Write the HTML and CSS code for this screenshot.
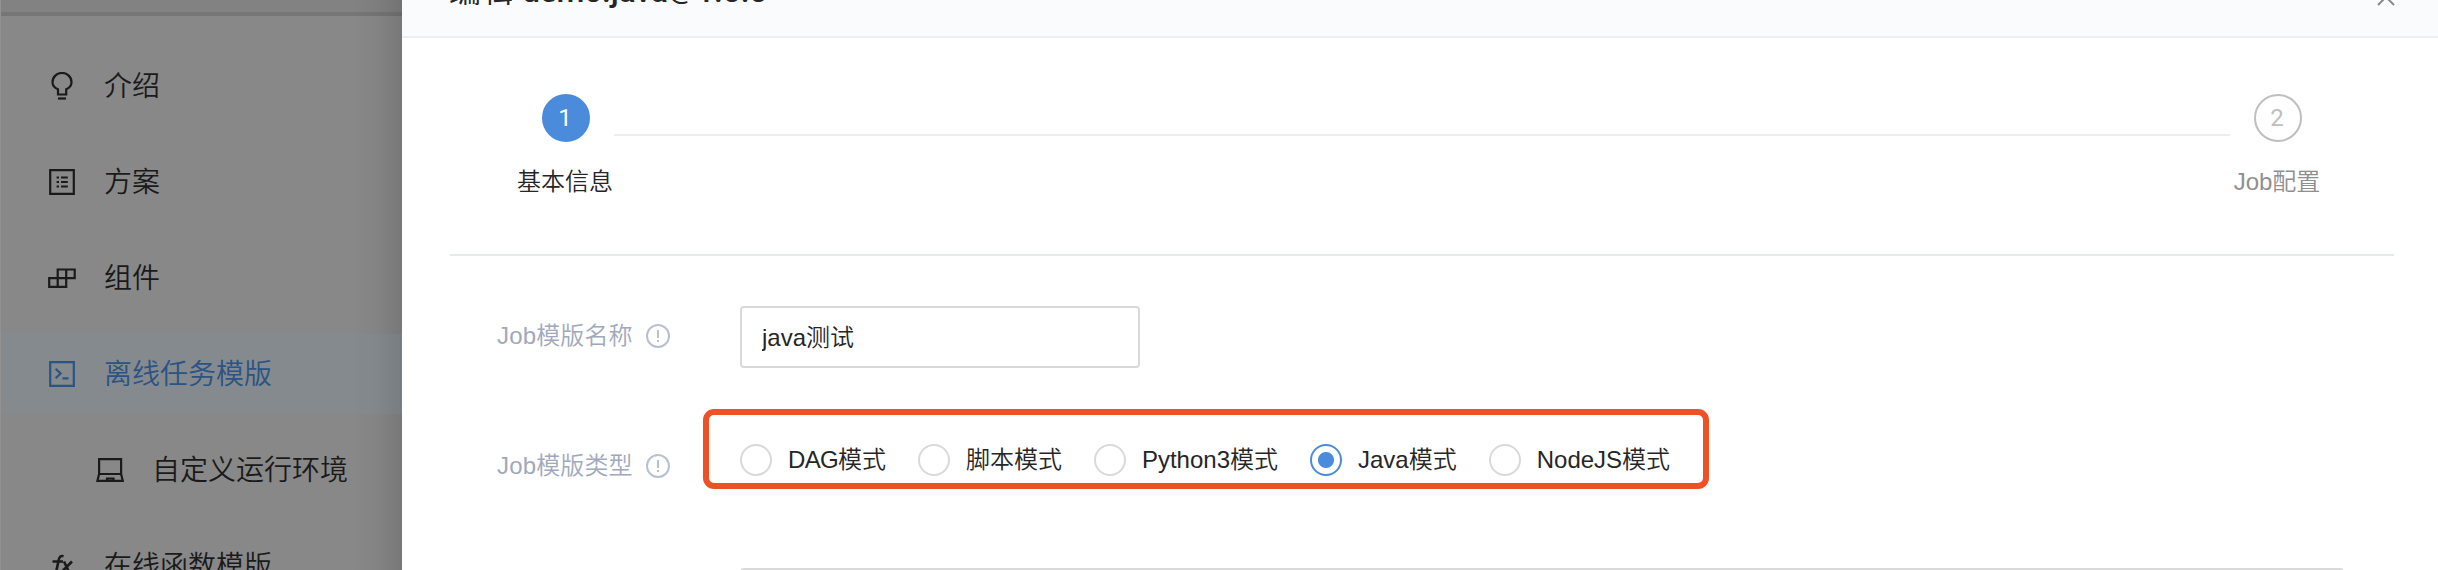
FILE: index.html
```html
<!DOCTYPE html>
<html lang="zh-CN">
<head>
<meta charset="utf-8">
<title>编辑 demo.java@1.0.0</title>
<link rel="stylesheet" href="styles.css">
</head>
<body>
<div class="app">
  <nav class="sidebar">
    <div class="topbar"></div>
    <ul class="menu">
      <li class="item">
        <svg class="icon" viewBox="0 0 28 28"><path d="M10 22.500v-5.200C6.500 15.700 4.500 13.200 4.500 10.200a9.500 9.300 0 0 1 19 0c0 3-2 5.500-5.300 7.100v5.200z"/><path d="M10 26.500h8"/></svg>
        <span>介绍</span>
      </li>
      <li class="item">
        <svg class="icon" viewBox="0 0 28 28"><path d="M2.200 2.200h23.600v23.600H2.200zM13 9.500h6.800M13 14h6.800M13 18.500h6.800M8.600 9.500h2.400M8.600 14h2.400M8.600 18.500h2.400"/></svg>
        <span>方案</span>
      </li>
      <li class="item">
        <svg class="icon" viewBox="0 0 28 28"><path d="M9.700 5.500h17v8.700h-17zM1.200 14.200h17v8.600h-17zM9.700 14.200v8.600M18.200 5.500v8.700"/></svg>
        <span>组件</span>
      </li>
      <li class="item active">
        <svg class="icon" viewBox="0 0 28 28"><path d="M2.200 2.200h23.600v23.600H2.200zM7.600 8.800l5 4.700-5 4.700M14.500 18.300h6"/></svg>
        <span>离线任务模版</span>
      </li>
      <li class="item child">
        <svg class="icon" viewBox="0 0 28 28"><path d="M3.100 3.100h22v14.900h-22zM3.100 18l-1.700 6.900h25.400l-1.700-6.900M11 24.900v-2.400h6.500v2.400"/></svg>
        <span>自定义运行环境</span>
      </li>
      <li class="item">
        <svg class="icon fx" viewBox="0 0 28 28"><path d="M15.500 4.200c-2.700-.8-4 .5-4.600 3L8 20.500c-.6 2.500-1.800 3.500-4 3M4.500 9.500h10.500M16 9.500l5.500 11.500M24 9.500L12.500 21"/></svg>
        <span>在线函数模版</span>
      </li>
    </ul>
  </nav>

  <main class="drawer">
    <header class="head">
      <h1 class="title"><span>编辑</span> <span class="name">demo.java<span class="at">@</span>1.0.0</span></h1>
      <svg class="close" viewBox="0 0 20 20"><path d="M2 2l16 16M18 2L2 18"/></svg>
    </header>

    <section class="steps">
      <div class="step current"><b class="dot">1</b><span>基本信息</span></div>
      <i class="rail"></i>
      <div class="step"><b class="dot">2</b><span>Job配置</span></div>
    </section>

    <form class="form">
      <div class="row">
        <div class="label"><span>Job模版名称</span>
          <svg class="hint" viewBox="0 0 24 24"><circle cx="12" cy="12" r="11"/><path d="M12 6v8M12 16v2"/></svg>
        </div>
        <input class="input" type="text" value="java测试">
      </div>
      <div class="row types">
        <div class="label"><span>Job模版类型</span>
          <svg class="hint" viewBox="0 0 24 24"><circle cx="12" cy="12" r="11"/><path d="M12 6v8M12 16v2"/></svg>
        </div>
        <div class="radios">
          <label class="radio"><i></i><span><span class="tight">DAG</span>模式</span></label>
          <label class="radio"><i></i><span>脚本模式</span></label>
          <label class="radio"><i></i><span>Python3模式</span></label>
          <label class="radio checked"><i></i><span>Java模式</span></label>
          <label class="radio"><i></i><span>NodeJS模式</span></label>
        </div>
      </div>
      <div class="panel"></div>
    </form>
  </main>
</div>
</body>
</html>
```
FILE: styles.css
```css
* { box-sizing: border-box; }
body {
  margin: 0;
  height: 570px;
  overflow: hidden;
  font-family: "Liberation Sans", "Noto Sans CJK SC", sans-serif;
  font-weight: 350;
  font-size: 24px;
  color: #262626;
  background: #fff;
}
.app { display: flex; height: 570px; overflow: hidden; }

.sidebar {
  width: 402px;
  flex: none;
  border-left: 1px solid #929292;
  background: linear-gradient(to right, transparent 350px, rgba(0,0,0,.03) 375px, rgba(0,0,0,.12)), #888;
  overflow: hidden;
}
.topbar { height: 16px; border-bottom: 4px solid rgba(0,0,0,.09); background: rgba(0,0,0,.04); }
.menu { list-style: none; margin: 0; padding: 30px 0 0; }
.item {
  display: flex;
  align-items: center;
  gap: 28px;
  height: 80px;
  margin-bottom: 16px;
  padding-left: 47px;
  font-size: 28px;
  color: #1a1a1a;
  white-space: nowrap;
}
.item:first-child .icon { margin-top: -1px; }
.item span { padding-bottom: 4px; }
.item.child { padding-left: 95px; }
.item.active { color: #2b5384; background: rgba(120,150,170,.18); }
.icon { width: 28px; height: 28px; flex: none; fill: none; stroke: currentColor; stroke-width: 2.2; }
.fx { stroke-width: 2.6; }

.drawer { flex: 1; min-width: 0; background: #fff; }
.head {
  display: flex;
  justify-content: space-between;
  height: 38px;
  padding: 0 42px 0 47px;
  background: #fafbfd;
  border-bottom: 2px solid #eeeff0;
}
.title { margin: -29px 0 0; font-size: 32px; font-weight: 400; line-height: 40px; white-space: nowrap; }
.name { font-family: "Roboto", sans-serif; font-weight: 500; letter-spacing: -.25px; }
.at { font-weight: 400; vertical-align: 4px; line-height: 1; }
.close { width: 20px; height: 20px; margin-top: -13px; fill: none; stroke: #888; stroke-width: 2; }

.steps {
  display: flex;
  justify-content: space-between;
  height: 218px;
  margin: 0 44px 0 48px;
  padding: 56px 68px 0 68px;
  border-bottom: 2px solid #e6eaee;
}
.step { display: flex; flex-direction: column; align-items: center; gap: 23px; line-height: 34px; color: #8f8f8f; width: 96px; white-space: nowrap; }
.step span { margin-left: -2px; }
.dot {
  display: flex;
  align-items: center;
  justify-content: center;
  width: 48px;
  height: 48px;
  padding-right: 2px;
  border: 2px solid #bfbfbf;
  border-radius: 50%;
  font: 400 24px "Roboto", sans-serif;
  color: #bfbfbf;
}
.current { color: #262626; }
.current .dot { color: #fff; background: #4a8cdb; border-color: #4a8cdb; }
.rail { flex: 1; height: 2px; margin-top: 40px; background: #eee; }

.form { padding: 50px 106px 0 95px; }
.row { display: flex; }
.label { display: flex; align-items: center; gap: 13px; width: 243px; height: 60px; color: #a0a9bc; white-space: nowrap; }
.label span { padding-bottom: 5px; letter-spacing: .15px; }
.hint { width: 24px; height: 24px; fill: none; stroke: #b8c1d1; stroke-width: 2; }
.input {
  width: 400px;
  height: 62px;
  padding: 0 20px 3px;
  border: 2px solid #d9d9d9;
  border-radius: 4px;
  font: inherit;
  color: #262626;
  outline: 0;
}
.types { margin-top: 41px; }
.types .label { width: 206px; margin-top: 27px; }
.radios {
  display: flex;
  align-items: center;
  gap: 32px;
  width: 1006px;
  height: 80px;
  padding: 21px 0 0 31px;
  border: 6px solid #ee5126;
  border-radius: 11px;
}
.radio { display: flex; align-items: center; gap: 16px; white-space: nowrap; }
.radio > span { padding-bottom: 4px; }
.tight { letter-spacing: -.7px; }
.radio i { width: 32px; height: 32px; border: 2px solid #d9d9d9; border-radius: 50%; }
.checked i { border-color: #4a8cdb; background: radial-gradient(circle, #4a8cdb 7.500px, transparent 8.500px); }
.panel { height: 80px; margin: 72px -12px 0 243px; border: 2px solid #d9d9d9; border-radius: 4px; }
```
